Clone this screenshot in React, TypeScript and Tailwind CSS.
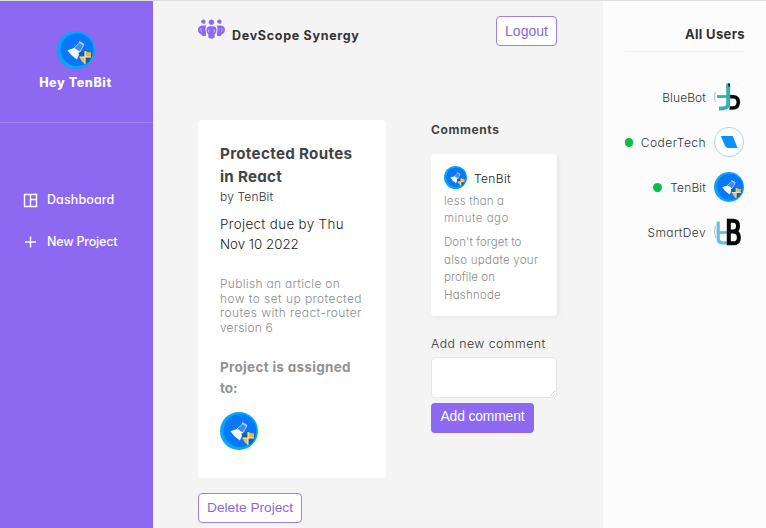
import React from "react";

function FlaskAvatar({ className }: { className: string }) {
  return (
    <svg viewBox="0 0 38 38" className={`block shrink-0 ${className}`}>
      <circle cx="19" cy="19" r="19" fill="#06a6f8" />
      <circle cx="20" cy="18.7" r="16.4" fill="#0878f8" />
      <path d="M17 17 L23 11.5 L26.5 14.5 L22.5 21.5 Z" fill="#3d8cf0" stroke="#b9d6fb" strokeWidth=".9" />
      <path d="M22 10.6 L27 13.8" stroke="#b9d6fb" strokeWidth="1.4" />
      <path d="M10.5 19.2 L16.8 17 L23 20.5 L22 24 L19.8 28.5 Q14 25 10.5 19.2 Z" fill="#f6f9ff" />
      <path d="M21.5 21.5 Q25 21.5 28 19 Q31 21.5 34.8 21.2 Q35.5 29.5 28.5 33.5 Q22 30 21.5 21.5Z" fill="#17619f" />
      <path d="M28 19.8 Q31 21.8 34.2 21.6 L33.8 26 H28Z" fill="#f7b53b" />
      <path d="M22.5 26 H28 V32.8 Q23.8 30.5 22.5 26Z" fill="#f3bb55" />
      <path d="M28 20 V33 M22.5 26 H34" stroke="#f7ecd0" strokeWidth="1.1" />
    </svg>
  );
}

function BlueBotAvatar() {
  return (
    <svg viewBox="0 0 30 30" className="block h-[30px] w-[30px] shrink-0">
      <circle cx="15" cy="15" r="14.5" fill="#fff" stroke="#eceeee" strokeWidth=".5" />
      <path d="M1 10 Q0 15 1.2 20" fill="none" stroke="#8b9696" strokeWidth=".6" />
      <path d="M15 14.8 H19 Q24.3 15 24.3 20 Q24.3 26 18.5 26 H15.5" fill="none" stroke="#080808" strokeWidth="3.6" />
      <path d="M14.2 1.5 V22.5 Q14 26.6 5 26.6" fill="none" stroke="#36afad" strokeWidth="4" />
      <path d="M3 14.5 H15" stroke="#36afad" strokeWidth="2.8" />
      <path d="M14 1.5 h2 v3 h-1.5z" fill="#111" />
    </svg>
  );
}

function CoderTechAvatar() {
  return (
    <svg viewBox="0 0 30 30" className="block h-[30px] w-[30px] shrink-0">
      <circle cx="15" cy="15" r="14.6" fill="#fff" stroke="#72bce0" strokeWidth=".6" />
      <path d="M6.8 9 H18.8 L23.6 21 H14 Q11.8 20.8 11 18.8Z" fill="#0b91fb" />
    </svg>
  );
}

function SmartDevAvatar() {
  return (
    <svg viewBox="0 0 30 30" className="block h-[30px] w-[30px] shrink-0">
      <circle cx="15" cy="15" r="14.5" fill="#fff" stroke="#eceeee" strokeWidth=".5" />
      <path d="M1.3 9 Q-.2 15 1.6 21" fill="none" stroke="#8b9696" strokeWidth=".6" />
      <path d="M4.2 4.5 V22 Q4.5 25.8 9 25.8 H14" fill="none" stroke="#65c1e0" strokeWidth="3.2" />
      <path d="M3 15.5 H14" stroke="#65c1e0" strokeWidth="2.8" />
      <path d="M15 3.7 H19 Q24 3.7 24 8.9 Q24 14.4 19 14.4 H15 M19 14.4 Q24.9 14.6 24.9 20.4 Q24.9 26.3 19 26.3 H15 M14.8 1.8 V28.2" fill="none" stroke="#080808" strokeWidth="4" />
    </svg>
  );
}

function TeamLogo() {
  return (
    <svg viewBox="0 0 27 20" className="block h-5 w-[27px]" fill="#8d69f1">
      <circle cx="5.4" cy="2.6" r="2.2" />
      <circle cx="21.4" cy="2.6" r="2.2" />
      <circle cx="13.4" cy="3.2" r="2.6" />
      <path d="M4 6.4 H8.2 Q6.6 10 8 13.8 L8 17 H4.2 L3.4 15.4 Q.2 14.4 0 11 Q0 7 4 6.4Z" />
      <path d="M23 6.4 H18.8 Q20.4 10 19 13.8 L19 17 H22.8 L23.6 15.4 Q26.8 14.4 27 11 Q27 7 23 6.4Z" />
      <path d="M11.5 7.2 H15.5 Q18.7 7.8 18.5 11.4 Q18.2 14.6 16.6 15.4 V18.6 Q16 19.7 13.5 19.7 Q11 19.7 10.4 18.6 V15.4 Q8.8 14.6 8.5 11.4 Q8.3 7.8 11.5 7.2Z" />
      <path d="M3.4 9.2 Q2.2 11 3.5 13.2 M23.6 9.2 Q24.8 11 23.5 13.2 M10.9 10.4 Q10.2 12 11.1 13.6 M16.1 10.4 Q16.8 12 15.9 13.6" fill="none" stroke="#dcd2f8" strokeWidth=".7" />
    </svg>
  );
}

const outline =
  "h-[30px] rounded border border-[#9c80ec] bg-white font-['Liberation_Sans',sans-serif] text-[#8d69d9]";

function UserRow({ name, tracking, online, children }: { name: string; tracking: string; online?: boolean; children: React.ReactNode }) {
  return (
    <div className="flex h-[30px] items-center justify-end">
      {online && <span className="mr-2 h-[9px] w-[9px] rounded-full bg-[#0ebb50]" />}
      <span className={`mr-2 pt-[2px] text-[12px] ${tracking}`}>{name}</span>
      {children}
    </div>
  );
}

export default function App() {
  return (
    <div className="flex h-[528px] w-[766px] overflow-hidden border-t border-[#dedede] bg-[#f4f4f4] font-[Inter,sans-serif] font-[360] text-[#333] [font-feature-settings:'cv11'] whitespace-nowrap">
      <aside className="w-[153px] shrink-0 bg-[#8d69f1] text-white">
        <div className="flex h-[122px] flex-col items-center border-b border-[#a083f1] pr-[2px] pt-[30px]">
          <FlaskAvatar className="h-[38px] w-[38px]" />
          <p className="mt-[4px] text-[12.5px] font-extrabold leading-5 tracking-[0.6px]">Hey TenBit</p>
        </div>
        <nav className="pl-[23px] pt-[66px] text-[12.5px] font-medium">
          <a className="flex h-[22px] items-center">
            <svg viewBox="0 0 15 15" className="h-[15px] w-[15px]" fill="none" stroke="white" strokeWidth="1.4">
              <path d="M1.5 1.5 H13.5 V13.5 H1.5Z M7.5 1.5 V13.5 M7.5 6.5 H13.5" />
            </svg>
            <span className="ml-[9px] tracking-[0.1px]">Dashboard</span>
          </a>
          <a className="mt-5 flex h-[22px] items-center">
            <svg viewBox="0 0 15 15" className="h-[15px] w-[15px]" fill="none" stroke="white" strokeWidth="1.4">
              <path d="M2 7 H13 M7.5 1.5 V12.5" />
            </svg>
            <span className="ml-[9px] tracking-[-0.2px]">New Project</span>
          </a>
        </nav>
      </aside>

      <main className="w-[450px] shrink-0 pl-[45px] pr-[46px] pt-[15px]">
        <header className="flex h-[30px] justify-between">
          <div className="flex">
            <div className="pt-[3px]"><TeamLogo /></div>
            <h1 className="ml-[7px] mt-[10px] text-[12.5px] font-bold leading-5 tracking-[0.7px]">DevScope Synergy</h1>
          </div>
          <button className={`w-[61px] text-[14px] leading-[26px] ${outline}`}>Logout</button>
        </header>
        <div className="mt-[74px] flex justify-between">
          <section>
            <article className="h-[358px] w-[188px] rounded bg-white pl-[22px] pt-[22px]">
              <h2 className="text-[15.2px] font-bold leading-[23px] text-[#444]">
                <span className="block tracking-[0.3px]">Protected Routes</span>
                <span className="block tracking-[0.25px]">in React</span>
              </h2>
              <p className="text-[12px] leading-[18px] tracking-[0.15px]">by TenBit</p>
              <p className="mt-[8px] text-[13.3px] leading-5 text-[#222]">
                <span className="block tracking-[0.38px]">Project due by Thu</span>
                <span className="block">Nov 10 2022</span>
              </p>
              <p className="mt-[23px] text-[12px] leading-[14.6px] text-[#8c8c8c]">
                <span className="block tracking-[0.3px]">Publish an article on</span>
                <span className="block tracking-[0.43px]">how to set up protected</span>
                <span className="block tracking-[0.42px]">routes with react-router</span>
                <span className="block tracking-[0.15px]">version 6</span>
              </p>
              <h3 className="mt-[22px] text-[13.5px] font-bold leading-[21px] text-[#929292]">
                <span className="block tracking-[0.3px]">Project is assigned</span>
                <span className="block">to:</span>
              </h3>
              <FlaskAvatar className="mt-[13px] h-[38px] w-[38px]" />
            </article>
            <button className={`mt-[15px] w-[104px] text-[13.7px] leading-[26px] ${outline}`}>Delete Project</button>
          </section>

          <section className="w-[126px]">
            <h3 className="text-[12px] font-bold leading-5 tracking-[0.6px] text-[#444]">Comments</h3>
            <article className="mt-[14px] h-[162px] rounded bg-white pl-[13px] pt-[12px] shadow-[2px_2px_4px_rgba(0,0,0,0.05)]">
              <div className="flex items-center">
                <FlaskAvatar className="h-[23px] w-[23px]" />
                <span className="ml-[7px] mt-[3px] text-[12px] leading-5 tracking-[0.35px] text-[#222]">TenBit</span>
              </div>
              <p className="mt-[4px] text-[11.5px] leading-[17px] text-[#929292]">
                <span className="block tracking-[0.15px]">less than a</span>
                <span className="block tracking-[0.45px]">minute ago</span>
              </p>
              <p className="mt-[7px] text-[11.5px] leading-[17.5px] text-[#8c8c8c]">
                <span className="block tracking-[0.05px]">Don't forget to</span>
                <span className="block tracking-[0.25px]">also update your</span>
                <span className="block tracking-[0.05px]">profile on</span>
                <span className="block tracking-[0.2px]">Hashnode</span>
              </p>
            </article>
            <label className="mt-[18px] block text-[12.3px] leading-5 tracking-[0.45px]">Add new comment</label>
            <div className="relative mt-[3px] h-[41px]">
              <textarea className="block h-full w-full resize-none rounded border border-[#e6e6e6] bg-white" />
              <svg viewBox="0 0 5 5" className="absolute bottom-[2px] right-[2px] h-[5px] w-[5px]" stroke="#aaa" strokeWidth=".6">
                <path d="M0 5 L5 0 M3 5 L5 3" />
              </svg>
            </div>
            <button className="mt-[5px] block h-[30px] w-[103px] rounded bg-[#8d69f1] pb-px font-['Liberation_Sans',sans-serif] text-[13.8px] font-normal tracking-[-0.1px] text-white">Add comment</button>
          </section>
        </div>
      </main>

      <aside className="w-[163px] shrink-0 bg-[#fcfcfc] pl-[22px] pr-[21px] pt-[23px]">
        <h2 className="h-[28px] border-b border-[#f4f4f4] text-right text-[13px] font-bold leading-5 tracking-[0.35px]">All Users</h2>
        <div className="mr-px mt-[30px] flex flex-col gap-[15px]">
          <UserRow name="BlueBot" tracking="tracking-[0.1px]"><BlueBotAvatar /></UserRow>
          <UserRow name="CoderTech" tracking="tracking-[0.45px]" online><CoderTechAvatar /></UserRow>
          <UserRow name="TenBit" tracking="tracking-[0.15px]" online><FlaskAvatar className="h-[30px] w-[30px]" /></UserRow>
          <UserRow name="SmartDev" tracking="tracking-[0.4px]"><SmartDevAvatar /></UserRow>
        </div>
      </aside>
    </div>
  );
}
